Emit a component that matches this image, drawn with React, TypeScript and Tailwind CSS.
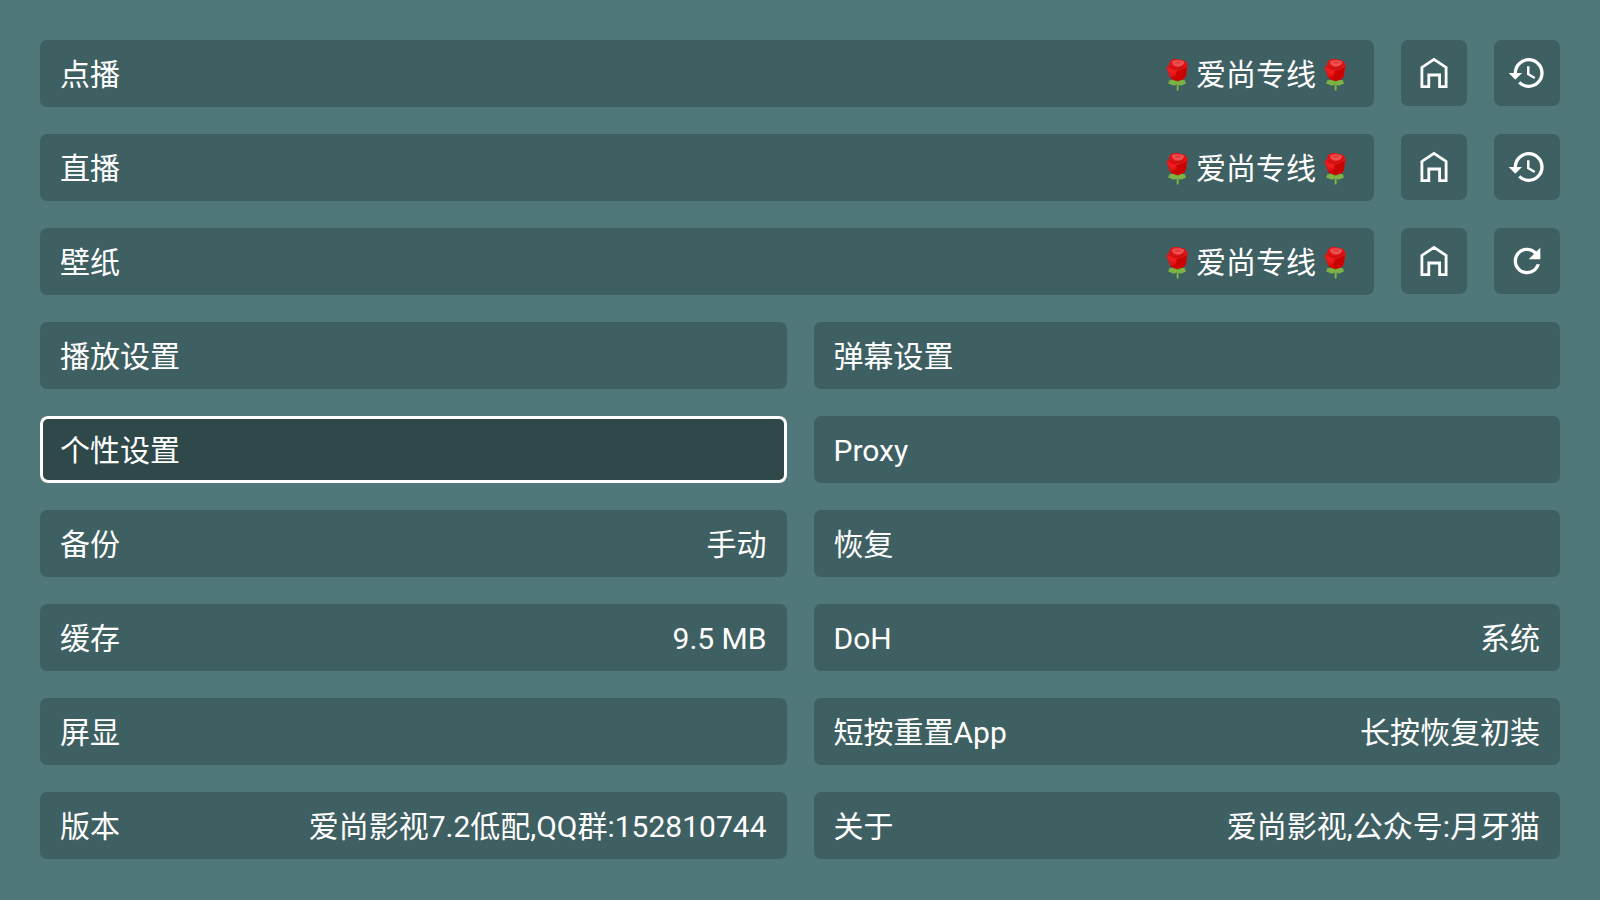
import type { ReactNode } from "react";
import clsx from "clsx";
import { MdHistory, MdRefresh } from "react-icons/md";

type Setting = {
  label: string;
  value?: string;
  focused?: boolean;
};

const SOURCE_NAME = "爱尚专线";

const sources = [
  { label: "点播", action: "history" },
  { label: "直播", action: "history" },
  { label: "壁纸", action: "refresh" },
];

const settings: Setting[] = [
  { label: "播放设置" },
  { label: "弹幕设置" },
  { label: "个性设置", focused: true },
  { label: "Proxy" },
  { label: "备份", value: "手动" },
  { label: "恢复" },
  { label: "缓存", value: "9.5 MB" },
  { label: "DoH", value: "系统" },
  { label: "屏显" },
  { label: "短按重置App", value: "长按恢复初装" },
  { label: "版本", value: "爱尚影视7.2低配,QQ群:152810744" },
  { label: "关于", value: "爱尚影视,公众号:月牙猫" },
];

function Rose() {
  return (
    <svg viewBox="0 0 38 36" className="h-9 w-[38px] shrink-0" aria-hidden="true">
      {/* stem and leaves */}
      <path d="M18.600 22h2v11.500h-2z" fill="#7cb342" />
      <path d="M19.500 23.500c-3-1.500-5.500-.5-8.500 0 .2 1.500-.5 2-1 3 2.500.2 3.500 2 6 2 2 0 3-1.300 3.500-3z" fill="#7cb342" />
      <path d="M19.800 23.500c3-1.500 5-.5 7.500 0-.2 1.500.3 2 .8 3-2 .2-3 2-5.300 2-2 0-3-1.300-3.500-3z" fill="#7cb342" />
      <path d="M14 22c2 1 3.500 2 5.500 3 1.700-1 3.400-2 5.400-3z" fill="#558b2f" />
      {/* bloom */}
      <path
        d="M13 3.500c-1.500 1.200-2.200 3-1.800 5C9.500 9 8.300 10 8.700 11.500c.3 1.700 1.600 2.500 1.900 4.500.4 3.500 2 7.500 8.900 7.800 7-.2 9-4 9-8.300 0-2.500 1.300-4.500 1.100-7-.2-1.300-.8-2.200-1.300-3-1-1.800-3-2.700-5-2.300-3-1.300-7.500-1.800-10.300.3z"
        fill="#e01414"
      />
      <path d="M18.500 14c4-.5 7-2.500 10.500-4-.2 2-.8 3.500-.8 6 0 4-2.200 7.200-8.700 7.500-3 0-6-1.500-7-3.500 5 .5 6.500-2 6-6z" fill="#c90202" />
      <path d="M9.500 11c2.500-.5 4.500 2.500 9.500 2.500-.5 2-2 3.500-4 3.500-3 0-5-2.500-5.500-6z" fill="#f01c1c" />
      <path d="M14 4.500c2.500-2 8-1.500 12 0 .3 3-2.500 5-6 5-3 0-6-2-6-5z" fill="#ef5050" />
      <path d="M16 5.500c2-1.200 5-1 7.500 0-1 1.300-5 1.600-7.500 0z" fill="#dc3838" />
      <path d="M11.800 8.500c2 2 4.500 2.700 7.500 2.600 3.500-.1 6-2 7.500-5-.3 3.500-3 6.200-7.500 6.200-4 0-6.700-1.300-7.500-3.800z" fill="#bf1010" />
    </svg>
  );
}

function HomeIcon() {
  return (
    <svg
      viewBox="0 0 40 40"
      className="size-10"
      fill="none"
      stroke="currentColor"
      strokeWidth="2.8"
      aria-hidden="true"
    >
      <path d="M7.900 33.600V14.400L20 6.400l12.100 8v19.200H25.600V22H14.800v11.600z" />
    </svg>
  );
}

function IconButton({ label, children }: { label: string; children: ReactNode }) {
  return (
    <button
      type="button"
      aria-label={label}
      className="flex size-[66px] shrink-0 items-center justify-center rounded-[7px] bg-[#3f6062]"
    >
      {children}
    </button>
  );
}

function SettingButton({ label, value, focused }: Setting) {
  return (
    <button
      type="button"
      className={clsx(
        "flex h-[67px] items-center justify-between px-5 pt-0.5",
        focused
          ? "rounded-lg bg-[#2f494a] ring-3 ring-white ring-inset"
          : "rounded-[7px] bg-[#3f6062]"
      )}
    >
      <span>{label}</span>
      {value && <span>{value}</span>}
    </button>
  );
}

export default function App() {
  return (
    <main className="flex min-h-screen flex-col gap-[27px] bg-[#50787a] p-10 font-['Roboto','Noto_Sans_CJK_SC',sans-serif] text-[30px] leading-9 text-white">
      {sources.map((source) => (
        <div key={source.label} className="flex gap-[27px]">
          <button
            type="button"
            className="flex h-[67px] flex-1 items-center justify-between rounded-[7px] bg-[#3f6062] px-5 pt-0.5"
          >
            <span>{source.label}</span>
            <span className="flex items-center">
              <Rose />
              {SOURCE_NAME}
              <Rose />
            </span>
          </button>
          <IconButton label={`${source.label} home`}>
            <HomeIcon />
          </IconButton>
          <IconButton label={`${source.label} ${source.action}`}>
            {source.action === "history" ? (
              <MdHistory className="size-10" />
            ) : (
              <MdRefresh className="size-10" />
            )}
          </IconButton>
        </div>
      ))}

      <div className="grid grid-cols-2 gap-[27px]">
        {settings.map((setting) => (
          <SettingButton key={setting.label} {...setting} />
        ))}
      </div>
    </main>
  );
}
